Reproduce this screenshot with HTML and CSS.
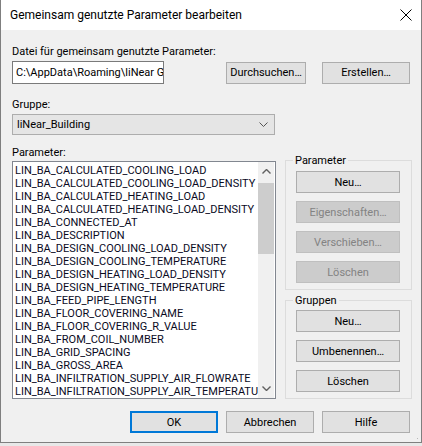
FILE: index.html
```html
<!DOCTYPE html>
<html>
<head>
  <title>Gemeinsam genutzte Parameter bearbeiten</title>
  <meta charset="UTF-8">
  <link rel="stylesheet" href="styles.css">
</head>
<body>
  <div class="window">
    <div class="titlebar">
      <span class="title">Gemeinsam genutzte Parameter bearbeiten</span>
      <svg class="close" width="12" height="12" viewBox="0 0 12 12">
        <path d="M0.5 0.5 L11.5 11.5 M11.5 0.5 L0.5 11.5" stroke="#000" stroke-width="1" fill="none"/>
      </svg>
    </div>

    <div class="content">
      <div class="label first">Datei für gemeinsam genutzte Parameter:</div>
      <div class="file-row">
        <div class="textbox">C:\AppData\Roaming\liNear G</div>
        <button class="btn btn-browse">Durchsuchen…</button>
        <button class="btn">Erstellen…</button>
      </div>

      <div class="label label-group">Gruppe:</div>
      <div class="combo">
        <span>liNear_Building</span>
        <svg width="9" height="5" viewBox="0 0 9 5">
          <path d="M0.5 0.5 L4.5 4.5 L8.5 0.5" stroke="#555" fill="none"/>
        </svg>
      </div>

      <div class="main">
        <div class="left">
          <div class="label">Parameter:</div>
          <div class="listbox">
            <ul class="items">
              <li>LIN_BA_CALCULATED_COOLING_LOAD</li>
              <li>LIN_BA_CALCULATED_COOLING_LOAD_DENSITY</li>
              <li>LIN_BA_CALCULATED_HEATING_LOAD</li>
              <li>LIN_BA_CALCULATED_HEATING_LOAD_DENSITY</li>
              <li>LIN_BA_CONNECTED_AT</li>
              <li>LIN_BA_DESCRIPTION</li>
              <li>LIN_BA_DESIGN_COOLING_LOAD_DENSITY</li>
              <li>LIN_BA_DESIGN_COOLING_TEMPERATURE</li>
              <li>LIN_BA_DESIGN_HEATING_LOAD_DENSITY</li>
              <li>LIN_BA_DESIGN_HEATING_TEMPERATURE</li>
              <li>LIN_BA_FEED_PIPE_LENGTH</li>
              <li>LIN_BA_FLOOR_COVERING_NAME</li>
              <li>LIN_BA_FLOOR_COVERING_R_VALUE</li>
              <li>LIN_BA_FROM_COIL_NUMBER</li>
              <li>LIN_BA_GRID_SPACING</li>
              <li>LIN_BA_GROSS_AREA</li>
              <li>LIN_BA_INFILTRATION_SUPPLY_AIR_FLOWRATE</li>
              <li>LIN_BA_INFILTRATION_SUPPLY_AIR_TEMPERATURE</li>
            </ul>
            <div class="scrollbar">
              <div class="arrow">
                <svg width="9" height="5" viewBox="0 0 9 5"><path d="M0.5 4.5 L4.5 0.5 L8.5 4.5" stroke="#606060" stroke-width="1.4" fill="none"/></svg>
              </div>
              <div class="track"><div class="thumb"></div></div>
              <div class="arrow">
                <svg width="9" height="5" viewBox="0 0 9 5"><path d="M0.5 0.5 L4.5 4.5 L8.5 0.5" stroke="#606060" stroke-width="1.4" fill="none"/></svg>
              </div>
            </div>
          </div>
        </div>

        <div class="side">
          <fieldset class="group group-params">
            <legend>Parameter</legend>
            <button class="btn">Neu…</button>
            <button class="btn" disabled>Eigenschaften…</button>
            <button class="btn" disabled>Verschieben…</button>
            <button class="btn" disabled>Löschen</button>
          </fieldset>
          <fieldset class="group group-groups">
            <legend>Gruppen</legend>
            <button class="btn">Neu…</button>
            <button class="btn">Umbenennen…</button>
            <button class="btn">Löschen</button>
          </fieldset>
        </div>
      </div>

      <div class="footer">
        <button class="btn btn-default">OK</button>
        <button class="btn">Abbrechen</button>
        <button class="btn">Hilfe</button>
      </div>
    </div>
    <div class="grip"></div>
  </div>
</body>
</html>
```

FILE: styles.css
```css
body {
  margin: 0;
  background-color: #e8e8e8;
  font-family: Roboto, "Noto Sans", sans-serif;
  font-size: 11px;
  color: #000;
}
.window {
  position: relative;
  width: 420px;
  height: 442px;
  border: 1px solid #7f7f7f;
  border-top: none;
  background-color: #f0f0f0;
}
.titlebar {
  height: 30px;
  background-color: #fff;
  display: flex;
  align-items: center;
  justify-content: space-between;
  padding: 0 9px 0 9px;
  font-size: 12px;
}
.close {
  display: block;
}
.content {
  padding: 0 9px 0 11px;
}
.label {
  height: 15px;
  line-height: 15px;
}
.label.first {
  margin-top: 14px;
}
.label-group {
  margin-top: 13px;
}
.file-row {
  display: flex;
  align-items: center;
  height: 23px;
  margin-top: 2px;
  padding-right: 2px;
}
.textbox {
  width: 147px;
  height: 21px;
  line-height: 21px;
  border: 1px solid #7a7a7a;
  background-color: #fff;
  padding-left: 3px;
  white-space: nowrap;
  overflow: hidden;
  font-size: 11px;
}
.btn {
  font-family: inherit;
  font-size: 11px;
  color: #000;
  background-color: #e1e1e1;
  border: 1px solid #adadad;
  height: 22px;
  width: 88px;
  padding: 0;
  margin: 0;
  white-space: nowrap;
}
.btn:disabled {
  background-color: #cccccc;
  border-color: #bfbfbf;
  color: #838383;
}
.file-row .btn {
  margin-left: 16px;
}
.file-row .btn-browse {
  width: 80px;
  margin-left: 62px;
}
.combo {
  margin-top: 2px;
  width: 263px;
  height: 21px;
  box-sizing: border-box;
  border: 1px solid #adadad;
  background-color: #e5e5e5;
  display: flex;
  align-items: center;
  justify-content: space-between;
  padding: 0 6px 0 4px;
}
.main {
  display: flex;
  align-items: flex-start;
  margin-top: 10px;
}
.left {
  width: 264px;
}
.listbox {
  margin-top: 1px;
  height: 238px;
  box-sizing: border-box;
  border: 1px solid #828790;
  background-color: #fff;
  display: flex;
}
.items {
  list-style: none;
  margin: 0;
  padding: 2px 0 0 2px;
  flex: 1;
  overflow: hidden;
  white-space: nowrap;
  color: #0a0a1e;
}
.items li {
  height: 13px;
  line-height: 13px;
}
.scrollbar {
  width: 16px;
  margin: 0 1px 0 0;
  background-color: #f0f0f0;
  display: flex;
  flex-direction: column;
}
.arrow {
  height: 19px;
  display: flex;
  align-items: center;
  justify-content: center;
}
.track {
  flex: 1;
  padding-top: 2px;
}
.thumb {
  height: 71px;
  background-color: #cdcdcd;
}
.side {
  margin-left: 9px;
  width: 127px;
  padding-top: 8px;
}
.group {
  box-sizing: border-box;
  margin: 0;
  padding: 0 0 0 10px;
  border: 1px solid #dcdcdc;
  display: flex;
  flex-direction: column;
  gap: 8px;
}
.group legend {
  padding: 0 2px;
  margin-left: -3px;
  line-height: 15px;
  height: 15px;
}
.group .btn {
  width: 104px;
}
.group-params {
  height: 137px;
  padding-top: 3px;
}
.group-groups {
  margin-top: 3px;
  height: 106px;
  padding-top: 2px;
}
.footer {
  display: flex;
  justify-content: flex-end;
  gap: 8px;
  margin-top: 12px;
  padding-right: 2px;
}
.btn-default {
  border: 2px solid #0078d7;
}
.grip {
  position: absolute;
  right: 1px;
  bottom: 1px;
  width: 7px;
  height: 7px;
  background-image: radial-gradient(circle, #b8b8b8 0.8px, transparent 1px);
  background-size: 3px 3px;
  clip-path: polygon(100% 0, 100% 100%, 0 100%);
}
```
